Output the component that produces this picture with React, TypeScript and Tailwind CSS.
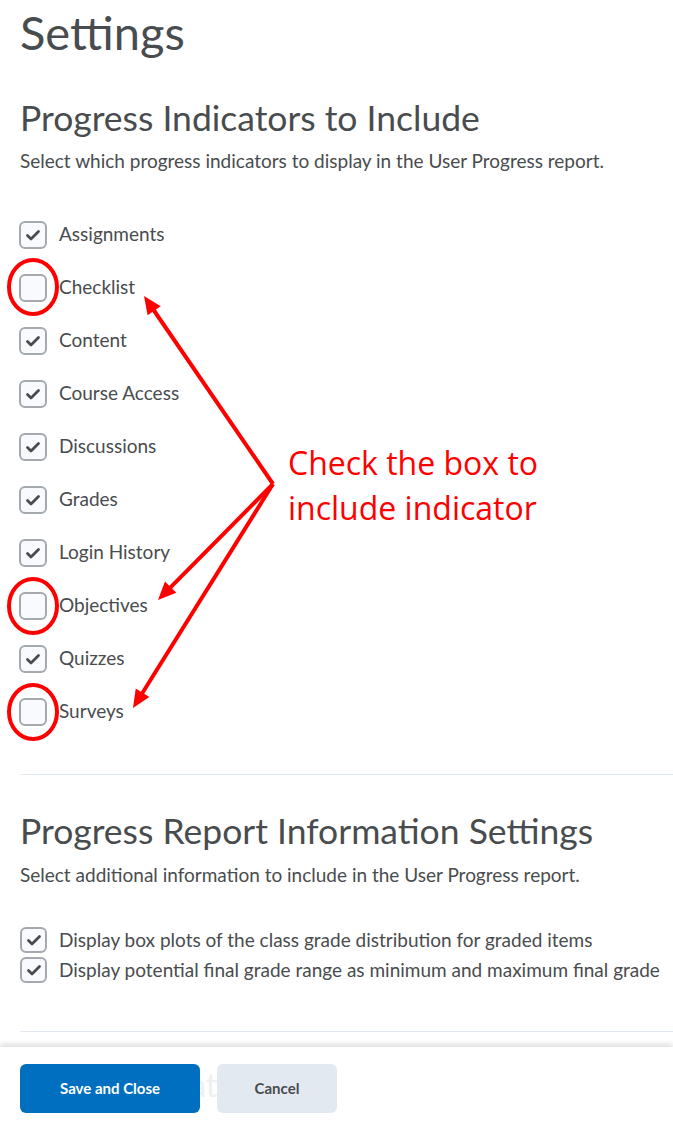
import React from 'react'

const indicators = [
  { label: 'Assignments', checked: true },
  { label: 'Checklist', checked: false },
  { label: 'Content', checked: true },
  { label: 'Course Access', checked: true },
  { label: 'Discussions', checked: true },
  { label: 'Grades', checked: true },
  { label: 'Login History', checked: true },
  { label: 'Objectives', checked: false },
  { label: 'Quizzes', checked: true },
  { label: 'Surveys', checked: false },
]

const extras = [
  'Display box plots of the class grade distribution for graded items',
  'Display potential final grade range as minimum and maximum final grade',
]

function Checkbox({ checked, small }: { checked: boolean; small?: boolean }) {
  return (
    <span
      className={
        'flex shrink-0 items-center justify-center rounded-[6px] border-2 border-[#a3a9af] bg-[#f9fafe] ' +
        (small ? 'w-[27px] h-[26px]' : 'w-[28px] h-[28px]')
      }
    >
      {checked && (
        <svg width="16" height="14" viewBox="0 0 16 14" fill="none">
          <path d="M2.5 7.5 L6 11 L13.5 3.5" stroke="#494c4e" strokeWidth="2.8" strokeLinecap="round" strokeLinejoin="round" />
        </svg>
      )}
    </span>
  )
}

type Pt = [number, number]

function Arrow({ from, to }: { from: Pt; to: Pt }) {
  const dx = to[0] - from[0]
  const dy = to[1] - from[1]
  const len = Math.hypot(dx, dy)
  const ux = dx / len
  const uy = dy / len
  const px = -uy
  const py = ux
  const head = 18
  const half = 8
  const bx = to[0] - ux * head
  const by = to[1] - uy * head
  return (
    <g>
      <line x1={from[0]} y1={from[1]} x2={to[0] - ux * 10} y2={to[1] - uy * 10} stroke="#ff0000" strokeWidth="4" />
      <polygon
        points={`${to[0]},${to[1]} ${bx + px * half},${by + py * half} ${bx - px * half},${by - py * half}`}
        fill="#ff0000"
      />
    </g>
  )
}

export default function App() {
  const vertex: Pt = [273, 484]
  return (
    <div className="relative w-[673px] h-[1125px] overflow-hidden bg-white text-[#494c4e]" style={{ fontFamily: 'Lato, "Noto Sans", sans-serif' }}>
      <div className="pt-1">
        <h1 className="pl-5 text-[47px] leading-[56px] font-normal">Settings</h1>

        <h2 className="mt-[38px] pl-5 text-[35.5px] leading-[40px] font-normal">Progress Indicators to Include</h2>
        <p className="mt-[11px] pl-5 text-[19px] leading-[24px]">
          Select which progress indicators to display in the User Progress report.
        </p>

        <div className="mt-[35px] pl-[19px]">
          {indicators.map(item => (
            <label key={item.label} className="flex h-[53px] items-center gap-[12px] text-[19px]">
              <Checkbox checked={item.checked} />
              <span>{item.label}</span>
            </label>
          ))}
        </div>

        <div className="mt-[36px] ml-5 border-t border-[#e3e9f1]" />

        <h2 className="mt-[36px] pl-5 text-[35.5px] leading-[40px] font-normal">Progress Report Information Settings</h2>
        <p className="mt-[12px] pl-5 text-[19px] leading-[24px]">
          Select additional information to include in the User Progress report.
        </p>

        <div className="mt-[38px] pl-[20px]">
          {extras.map(text => (
            <label key={text} className="flex h-[30px] items-center gap-[12px] text-[19px]">
              <Checkbox checked small />
              <span>{text}</span>
            </label>
          ))}
        </div>

        <div className="mt-[46px] ml-5 border-t border-[#e3e9f1]" />
      </div>

      {/* sticky footer */}
      <div className="absolute bottom-0 left-0 right-0 h-[78px] bg-white shadow-[0_-3px_5px_rgba(0,0,0,0.13)]">
        <span className="absolute left-[190px] top-[14px] text-[32px] text-[#eef0f2]">at</span>
        <div className="relative flex gap-[17px] pl-5 pt-[17px]">
          <button className="h-[49px] w-[180px] rounded-[6px] bg-[#006fbf] text-[15px] font-bold text-white">
            Save and Close
          </button>
          <button className="h-[49px] w-[120px] rounded-[6px] bg-[#e3e9f1] text-[15px] font-bold text-[#494c4e]">
            Cancel
          </button>
        </div>
      </div>

      {/* annotations */}
      <svg className="pointer-events-none absolute inset-0" width="673" height="1125">
        <ellipse cx="33" cy="287" rx="24" ry="27" fill="none" stroke="#ff0000" strokeWidth="4" />
        <ellipse cx="33" cy="606" rx="24" ry="27" fill="none" stroke="#ff0000" strokeWidth="4" />
        <ellipse cx="33" cy="712" rx="24" ry="27" fill="none" stroke="#ff0000" strokeWidth="4" />
        <Arrow from={vertex} to={[144, 296]} />
        <Arrow from={vertex} to={[158, 600]} />
        <Arrow from={vertex} to={[133, 708]} />
      </svg>
      <div
        className="absolute left-[288px] top-[440px] text-[32px] leading-[45px] text-[#ff0000]"
        style={{ fontFamily: '"Open Sans", "Noto Sans", sans-serif' }}
      >
        <div>Check the box to</div>
        <div>include indicator</div>
      </div>
    </div>
  )
}
